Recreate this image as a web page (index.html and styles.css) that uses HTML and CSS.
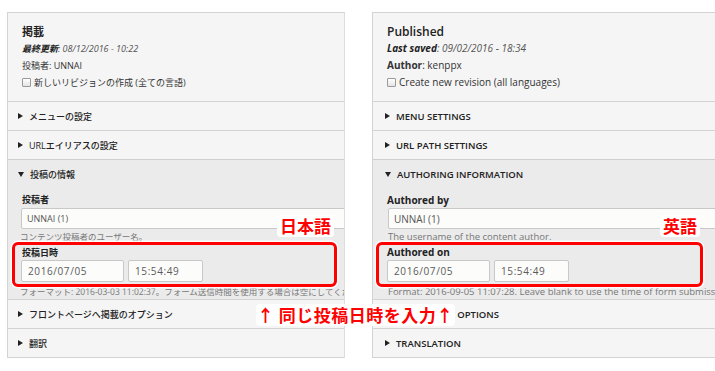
FILE: index.html
```html
<!DOCTYPE html>
<html lang="ja">
<head>
<meta charset="utf-8">
<title>投稿日時</title>
<link rel="stylesheet" href="styles.css">
</head>
<body>
<div class="page">
  <div class="panel panel--ja">
    <div class="meta">
      <div class="meta__title">掲載</div>
      <div class="meta__line meta__line--em"><b>最終更新</b>: 08/12/2016 - 10:22</div>
      <div class="meta__line">投稿者: UNNAI</div>
      <div class="meta__line"><span class="box"></span>新しいリビジョンの作成 (全ての言語)</div>
    </div>
    <div class="row"><svg class="tri" width="5" height="6" viewBox="0 0 5 6"><path d="M0 0L5 3L0 6Z"/></svg>メニューの設定</div>
    <div class="row"><svg class="tri" width="5" height="6" viewBox="0 0 5 6"><path d="M0 0L5 3L0 6Z"/></svg>URLエイリアスの設定</div>
    <div class="open">
      <div class="row row--open"><svg class="tri" width="6" height="5" viewBox="0 0 6 5"><path d="M0 0H6L3 5Z"/></svg>投稿の情報</div>
      <div class="field">
        <div class="label">投稿者</div>
        <div class="input input--wide">UNNAI (1)</div>
        <div class="desc">コンテンツ投稿者のユーザー名。</div>
        <div class="label label--2">投稿日時</div>
        <div class="inputs"><div class="input input--date">2016/07/05</div><div class="input input--time">15:54:49</div></div>
        <div class="desc desc--fmt">フォーマット: 2016-03-03 11:02:37。フォーム送信時間を使用する場合は空にしてください。</div>
      </div>
    </div>
    <div class="row"><svg class="tri" width="5" height="6" viewBox="0 0 5 6"><path d="M0 0L5 3L0 6Z"/></svg>フロントページへ掲載のオプション</div>
    <div class="row row--last"><svg class="tri" width="5" height="6" viewBox="0 0 5 6"><path d="M0 0L5 3L0 6Z"/></svg>翻訳</div>
  </div>

  <div class="panel panel--en">
    <div class="meta">
      <div class="meta__title meta__title--en">Published</div>
      <div class="meta__line meta__line--em"><b>Last saved</b>: 09/02/2016 - 18:34</div>
      <div class="meta__line"><b>Author</b>: kenppx</div>
      <div class="meta__line"><span class="box"></span>Create new revision (all languages)</div>
    </div>
    <div class="row"><svg class="tri" width="5" height="6" viewBox="0 0 5 6"><path d="M0 0L5 3L0 6Z"/></svg>MENU SETTINGS</div>
    <div class="row"><svg class="tri" width="5" height="6" viewBox="0 0 5 6"><path d="M0 0L5 3L0 6Z"/></svg>URL PATH SETTINGS</div>
    <div class="open">
      <div class="row row--open"><svg class="tri" width="6" height="5" viewBox="0 0 6 5"><path d="M0 0H6L3 5Z"/></svg>AUTHORING INFORMATION</div>
      <div class="field">
        <div class="label">Authored by</div>
        <div class="input input--wide">UNNAI (1)</div>
        <div class="desc">The username of the content author.</div>
        <div class="label label--2">Authored on</div>
        <div class="inputs"><div class="input input--date">2016/07/05</div><div class="input input--time">15:54:49</div></div>
        <div class="desc desc--fmt">Format: 2016-09-05 11:07:28. Leave blank to use the time of form submission.</div>
      </div>
    </div>
    <div class="row"><svg class="tri" width="5" height="6" viewBox="0 0 5 6"><path d="M0 0L5 3L0 6Z"/></svg>PROMOTION OPTIONS</div>
    <div class="row row--last"><svg class="tri" width="5" height="6" viewBox="0 0 5 6"><path d="M0 0L5 3L0 6Z"/></svg>TRANSLATION</div>
  </div>

  <div class="hl hl--ja"></div>
  <div class="hl hl--en"></div>
  <div class="tag tag--ja">日本語</div>
  <div class="tag tag--en">英語</div>
  <div class="note">↑ 同じ投稿日時を入力↑</div>
</div>
</body>
</html>
```
FILE: styles.css
```css
html, body {
  margin: 0;
  padding: 0;
  background: #fff;
}
body {
  font-family: "Open Sans", "Noto Sans CJK JP", sans-serif;
  color: #333;
  width: 715px;
  height: 371px;
  overflow: hidden;
}
.page {
  position: relative;
  display: flex;
  align-items: flex-start;
  padding-top: 12px;
  width: 715px;
  height: 371px;
  box-sizing: border-box;
}
.panel {
  box-sizing: border-box;
  border-top: 1px solid #d3d3d3;
  border-left: 1px solid #d3d3d3;
  background: #f5f5f5;
  overflow: hidden;
  white-space: nowrap;
  --meta-pad: 14px;
  --row-pad: 10px;
  --label-pad: 14px;
  --input-pad: 13px;
  --desc-pad: 12px;
}
.panel--ja {
  margin-left: 7px;
  width: 338px;
  border-right: 1px solid #dcdcdc;
  font-size: 9px;
}
.panel--en {
  margin-left: 27px;
  flex: 1;
  font-size: 10px;
  --row-pad: 12px;
  --input-pad: 15px;
  --desc-pad: 15px;
}

/* meta block */
.meta {
  height: 88px;
  box-sizing: border-box;
  padding: 10px var(--meta-pad) 10px;
}
.meta__title {
  font-size: 11px;
  font-weight: 700;
  line-height: 17px;
  color: #222;
}
.meta__title--en {
  font-size: 12px;
  font-weight: 600;
}
.meta__line {
  line-height: 17px;
  color: #333;
}
.meta__line--em {
  font-style: italic;
  color: #555;
}
.meta__line--em b {
  color: #222;
}
.box {
  display: inline-block;
  width: 7px;
  height: 7px;
  border: 1px solid #9a9a9a;
  border-radius: 1px;
  background: linear-gradient(#fff, #e4e4e4);
  vertical-align: -1px;
  margin-right: 3px;
}

/* collapsible rows */
.row {
  display: flex;
  align-items: center;
  height: 28px;
  border-top: 1px solid #d3d3d3;
  padding-left: var(--row-pad);
  color: #222;
  font-weight: 500;
}
.panel--en .row {
  font-size: 9.5px;
  font-weight: 600;
}
.row--last {
  border-bottom: 1px solid #d3d3d3;
}
.tri {
  fill: #222;
  margin-right: 6px;
  flex: none;
}

/* open section */
.open {
  background: #ebebeb;
  height: 140px;
  box-sizing: border-box;
  border-top: 1px solid #cfcfcf;
}
.open .row--open {
  border-top: 0;
}
.field {
  padding-top: 4px;
}
.label {
  line-height: 16px;
  padding-left: var(--label-pad);
  font-weight: 600;
  color: #222;
}
.panel--en .label {
  font-weight: 700;
}
.label--2 {
  line-height: 15px;
}
.input {
  box-sizing: border-box;
  height: 21px;
  border: 1px solid #c8c8c8;
  border-radius: 2px;
  background: #fcfcfa;
  color: #555;
  display: flex;
  align-items: center;
  padding-left: 5px;
}
.input--wide {
  margin-left: var(--input-pad);
  margin-right: -4px;
}
.inputs {
  display: flex;
  gap: 4px;
}
.panel--ja .inputs {
  padding-left: 13px;
}
.panel--en .inputs {
  padding-left: 14px;
}
.input--date,
.input--time {
  height: 22px;
  padding-left: 6px;
  letter-spacing: 0.6px;
  font-size: 10px;
  color: #5a5a5a;
}
.input--date { width: 103px; }
.input--time { width: 75px; }
.desc {
  line-height: 16px;
  padding-left: var(--desc-pad);
  color: #777;
  font-size: 8.5px;
}
.panel--en .desc {
  font-size: 9.5px;
}
.desc--fmt {
  margin-top: 3px;
  line-height: 14px;
}

/* annotations */
.hl {
  position: absolute;
  top: 242px;
  height: 45px;
  box-sizing: border-box;
  border: 3px solid #ff0000;
  border-radius: 6px;
  box-shadow: 0 0 0 1.5px rgba(255, 255, 255, 0.85);
}
.hl--ja { left: 12px; width: 325px; }
.hl--en { left: 376px; width: 327px; }
.tag {
  position: absolute;
  top: 215px;
  padding: 1px 3px;
  background: #fff;
  border-radius: 4px;
  font-family: "Noto Sans CJK JP", sans-serif;
  font-size: 17px;
  font-weight: 700;
  line-height: 20px;
  color: #ff0000;
}
.tag--ja { left: 277px; }
.tag--en { left: 660px; }
.note {
  position: absolute;
  left: 256px;
  top: 304px;
  padding: 0 1px;
  background: #fff;
  border-radius: 4px;
  font-family: "Noto Sans CJK JP", sans-serif;
  font-size: 17px;
  font-weight: 700;
  letter-spacing: 0.5px;
  line-height: 22px;
  color: #ff0000;
  white-space: nowrap;
}
```
